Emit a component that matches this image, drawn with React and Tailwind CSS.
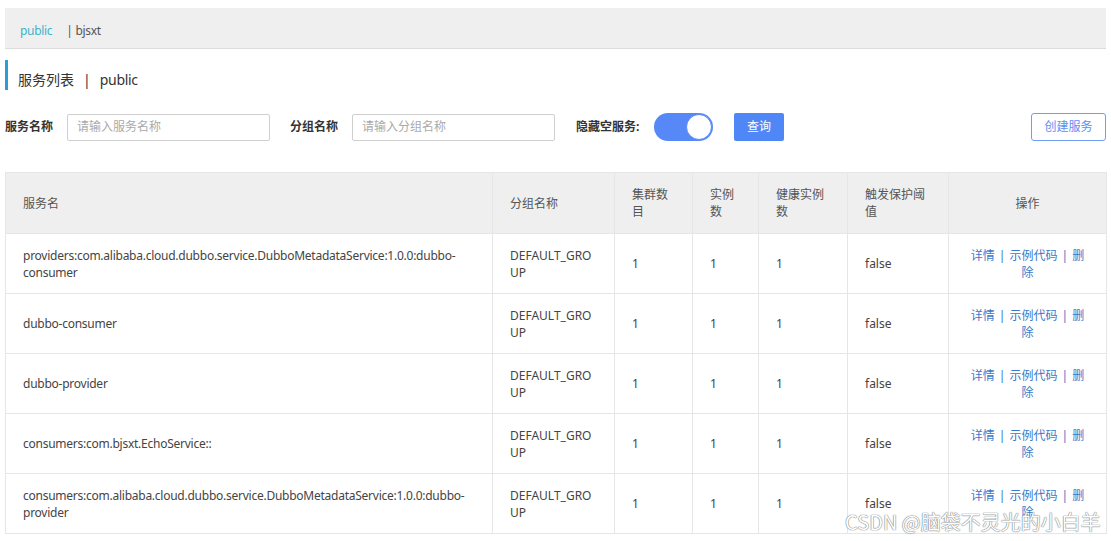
const font = "font-['Noto_Sans','Noto_Sans_CJK_SC',sans-serif]";

const rows = [
  { name: "providers:com.alibaba.cloud.dubbo.service.DubboMetadataService:1.0.0:dubbo-consumer" },
  { name: "dubbo-consumer" },
  { name: "dubbo-provider" },
  { name: "consumers:com.bjsxt.EchoService::" },
  { name: "consumers:com.alibaba.cloud.dubbo.service.DubboMetadataService:1.0.0:dubbo-provider" },
];

const cols = ["w-[487px]", "w-[122px]", "w-[78px]", "w-[66px]", "w-[89px]", "w-[101px]", "w-[158px]"];

function Cell({ i, children, className = "" }) {
  return (
    <td className={`${cols[i]} border border-[#e6e6e6] px-[17px] align-middle ${className}`}>
      {children}
    </td>
  );
}

export default function App() {
  return (
    <div className={`relative w-[1111px] h-[541px] bg-white overflow-hidden ${font} text-[12px] text-[#333]`}>
      <div className="px-[5px] pt-[8px]">
        {/* breadcrumb bar */}
        <div className="h-[41px] bg-[#efefef] border-b border-[#dcdcdc] flex items-center pl-[15px] pt-[5px] text-[12px] tracking-[-0.3px]">
          <span className="text-[#3db3cc]">public</span>
          <span className="ml-[14px] text-[#555]">| bjsxt</span>
        </div>

        {/* title */}
        <div className="mt-[11px] h-[30px] flex items-center border-l-[3px] border-[#2a9fd6] pl-[10px] pt-[8px] text-[14px] text-[#333]">
          <span>服务列表</span>
          <span className="mx-[9px]">|</span>
          <span className="tracking-[-0.3px]">public</span>
        </div>

        {/* search row */}
        <div className="mt-[23px] h-[28px] flex items-center">
          <span className="font-bold text-[#333] w-[62px]">服务名称</span>
          <div className="w-[203px] h-[27px] border border-[#cfcfcf] rounded-[2px] flex items-center pl-[9px] text-[#aaa]">请输入服务名称</div>
          <span className="font-bold text-[#333] ml-[20px] w-[62px]">分组名称</span>
          <div className="w-[203px] h-[27px] border border-[#cfcfcf] rounded-[2px] flex items-center pl-[9px] text-[#aaa]">请输入分组名称</div>
          <span className="font-bold text-[#333] ml-[21px] w-[78px]">隐藏空服务:</span>
          <div className="w-[59px] h-[28px] rounded-full bg-[#5689f7] flex items-center justify-end pr-[1px]">
            <div className="w-[26px] h-[26px] rounded-full bg-white border border-[#5689f7]" />
          </div>
          <div className="ml-[21px] w-[50px] h-[28px] rounded-[2px] bg-[#5087f6] text-white flex items-center justify-center">查询</div>
          <div className="ml-auto w-[75px] h-[28px] rounded-[3px] border border-[#6f9cf5] text-[#5a8ef5] flex items-center justify-center">创建服务</div>
        </div>

        {/* table */}
        <table className="mt-[31px] w-[1101px] border-collapse table-fixed leading-[17px]">
          <thead>
            <tr className="h-[61px] bg-[#efefef] text-[#555] text-left">
              <Cell i={0}>服务名</Cell>
              <Cell i={1}>分组名称</Cell>
              <Cell i={2}>集群数目</Cell>
              <Cell i={3}>实例数</Cell>
              <Cell i={4}>健康实例数</Cell>
              <Cell i={5}>触发保护阈值</Cell>
              <Cell i={6} className="text-center">操作</Cell>
            </tr>
          </thead>
          <tbody className="text-[#444]">
            {rows.map((r) => (
              <tr key={r.name} className="h-[60px]">
                <Cell i={0} className="tracking-[-0.25px]">{r.name}</Cell>
                <Cell i={1} className="break-all">DEFAULT_GROUP</Cell>
                <Cell i={2}>1</Cell>
                <Cell i={3}>1</Cell>
                <Cell i={4}>1</Cell>
                <Cell i={5}>false</Cell>
                <Cell i={6} className="text-center text-[#3a78c9] break-all">
                  详情<span className="mx-[4px]">|</span>示例代码<span className="mx-[4px]">|</span>删除
                </Cell>
              </tr>
            ))}
          </tbody>
        </table>
      </div>

      {/* watermark */}
      <div className="absolute left-[845px] top-[509px] text-[20px] leading-[26px] text-white font-['Noto_Sans_CJK_SC',sans-serif] [text-shadow:0_0_1px_#666,0_0_1px_#666]">
        CSDN @脑袋不灵光的小白羊
      </div>
    </div>
  );
}
